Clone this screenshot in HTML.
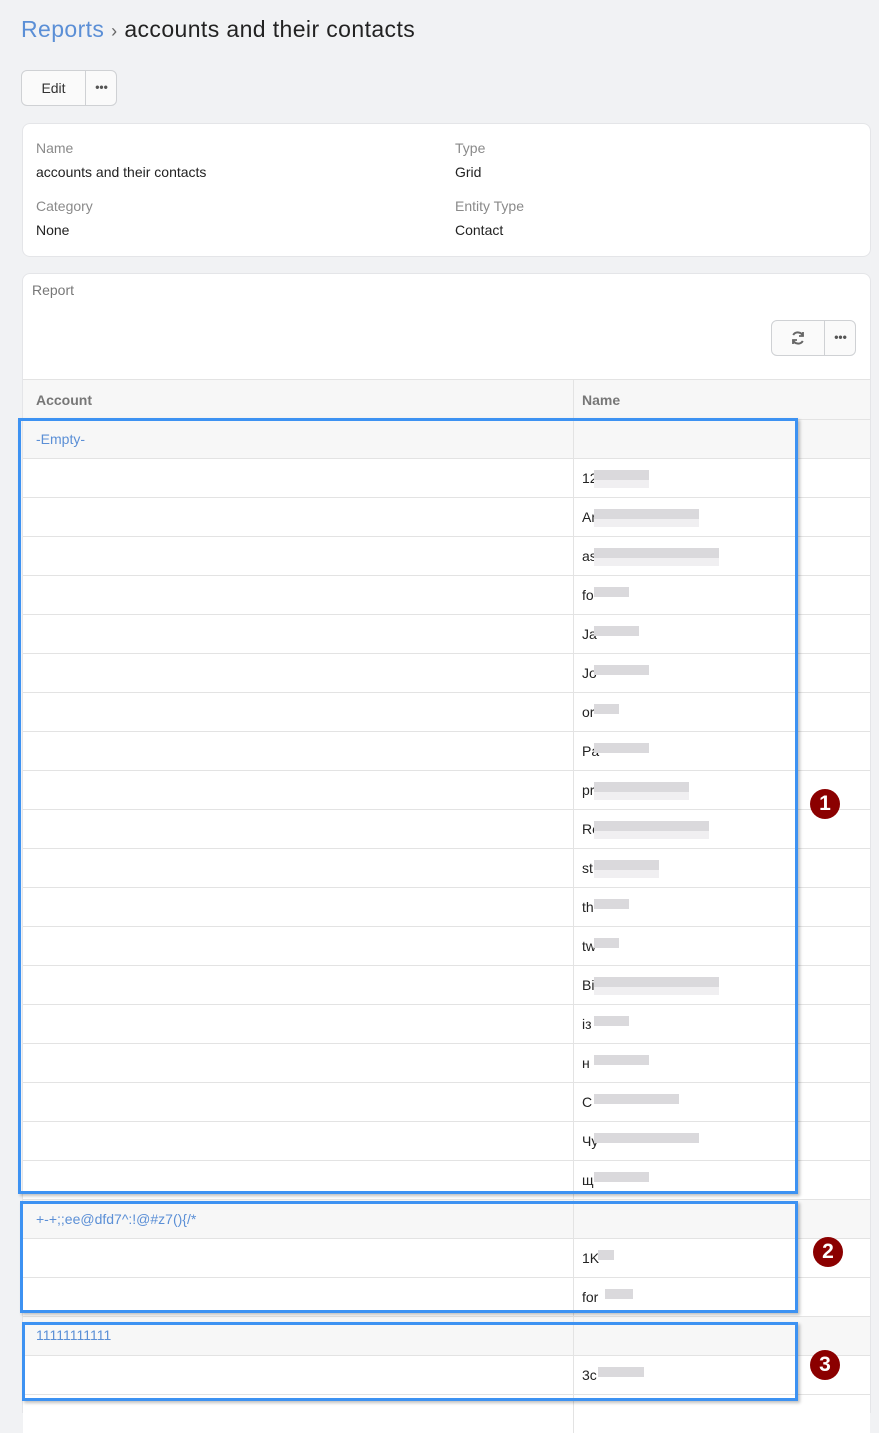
<!DOCTYPE html>
<html><head><meta charset="utf-8"><style>
*{box-sizing:border-box;margin:0;padding:0}
body{width:879px;height:1405px;background:#f1f2f4;font-family:"Liberation Sans","Noto Sans CJK SC",sans-serif;color:#222;position:relative;overflow:hidden;font-size:14px}
.a{position:absolute}
.lbl{color:#8a8a8a;font-size:14px}
.card{background:#fff;border:1px solid #e4e5e8;border-radius:8px}
.row{position:absolute;left:23px;width:847px;height:39px;border-top:1px solid #e3e3e3;background:#fff}
.row.g{background:#f7f7f7}
.row .c2{position:absolute;left:550px;top:0;bottom:0;border-left:1px solid #e3e3e3}
.row .t1{position:absolute;left:13px;top:11px;color:#5b8fd6;font-size:14px}
.row .t2{position:absolute;left:559px;top:11px;font-size:14px;color:#222}
.bl{position:absolute;top:11px;height:10px;background:#dad9dc}
.bl2{position:absolute;top:21px;height:8px;background:#f0eff1}
.box{position:absolute;border:3px solid #3d92f2;box-shadow:2px 2px 3px rgba(0,0,0,.25)}
.badge{position:absolute;width:30px;height:30px;border-radius:50%;background:#8b0000;color:#fff;font-weight:bold;font-size:21px;text-align:center;line-height:30px}
</style></head><body>
<div class="a" style="left:21px;top:16px;font-size:23px;letter-spacing:0.4px;white-space:nowrap"><span style="color:#5b8fd6">Reports</span> <span style="color:#666;font-size:18px">›</span> <span style="color:#222">accounts and their contacts</span></div>
<div class="a" style="left:21px;top:70px;width:96px;height:36px;border:1px solid #cfd1d4;border-radius:6px;background:#fafafa">
 <div class="a" style="left:0;top:0;width:64px;height:34px;border-right:1px solid #cfd1d4;text-align:center;line-height:34px;color:#333">Edit</div>
 <div class="a" style="left:64px;top:0;width:31px;height:34px;text-align:center;line-height:32px;color:#555;font-size:12px;font-weight:bold">•••</div>
</div>
<div class="a card" style="left:22px;top:123px;width:849px;height:134px">
 <div class="a lbl" style="left:13px;top:16px">Name</div>
 <div class="a" style="left:13px;top:40px">accounts and their contacts</div>
 <div class="a lbl" style="left:13px;top:74px">Category</div>
 <div class="a" style="left:13px;top:98px">None</div>
 <div class="a lbl" style="left:432px;top:16px">Type</div>
 <div class="a" style="left:432px;top:40px">Grid</div>
 <div class="a lbl" style="left:432px;top:74px">Entity Type</div>
 <div class="a" style="left:432px;top:98px">Contact</div>
</div>
<div class="a card" style="left:22px;top:273px;width:849px;height:1140px;border-radius:8px 8px 0 0">
 <div class="a lbl" style="left:9px;top:8px;color:#777">Report</div>
 <div class="a" style="left:748px;top:46px;width:85px;height:36px;border:1px solid #cfd1d4;border-radius:6px;background:#fafafa">
  <div class="a" style="left:0;top:0;width:53px;height:34px;border-right:1px solid #cfd1d4">
   <svg class="a" style="left:18px;top:9px" width="16" height="16" viewBox="0 0 16 16" fill="none" stroke="#666" stroke-width="2"><path d="M13 6A5.5 5.5 0 0 0 3.2 5"/><path d="M3 10a5.5 5.5 0 0 0 9.8 1"/><path d="M13 2v4h-4" stroke-width="1.8"/><path d="M3 14v-4h4" stroke-width="1.8"/></svg>
  </div>
  <div class="a" style="left:53px;top:0;width:31px;height:34px;text-align:center;line-height:32px;color:#555;font-size:12px;font-weight:bold">•••</div>
 </div>
</div>
<div class="a" style="left:0;top:-1px;width:879px;height:1410px">
<div class="row g" style="top:380px;height:40px;background:#f7f7f7"><div class="c2"></div>
 <div class="a" style="left:13px;top:12px;color:#777;font-weight:bold">Account</div>
 <div class="a" style="left:559px;top:12px;color:#777;font-weight:bold">Name</div></div>

<div class="row g" style="top:420px"><div class="c2"></div><div class="t1">-Empty-</div></div>
<div class="row" style="top:459px"><div class="c2"></div><div class="t2">12</div><div class="bl" style="left:571px;width:55px"></div><div class="bl2" style="left:571px;width:55px"></div></div>
<div class="row" style="top:498px"><div class="c2"></div><div class="t2">An</div><div class="bl" style="left:571px;width:105px"></div><div class="bl2" style="left:571px;width:105px"></div></div>
<div class="row" style="top:537px"><div class="c2"></div><div class="t2">as</div><div class="bl" style="left:571px;width:125px"></div><div class="bl2" style="left:571px;width:125px"></div></div>
<div class="row" style="top:576px"><div class="c2"></div><div class="t2">fo</div><div class="bl" style="left:571px;width:35px"></div></div>
<div class="row" style="top:615px"><div class="c2"></div><div class="t2">Ja</div><div class="bl" style="left:571px;width:45px"></div></div>
<div class="row" style="top:654px"><div class="c2"></div><div class="t2">Jo</div><div class="bl" style="left:571px;width:55px"></div></div>
<div class="row" style="top:693px"><div class="c2"></div><div class="t2">or</div><div class="bl" style="left:571px;width:25px"></div></div>
<div class="row" style="top:732px"><div class="c2"></div><div class="t2">Pa</div><div class="bl" style="left:571px;width:55px"></div></div>
<div class="row" style="top:771px"><div class="c2"></div><div class="t2">pr</div><div class="bl" style="left:571px;width:95px"></div><div class="bl2" style="left:571px;width:95px"></div></div>
<div class="row" style="top:810px"><div class="c2"></div><div class="t2">Re</div><div class="bl" style="left:571px;width:115px"></div><div class="bl2" style="left:571px;width:115px"></div></div>
<div class="row" style="top:849px"><div class="c2"></div><div class="t2">st</div><div class="bl" style="left:571px;width:65px"></div><div class="bl2" style="left:571px;width:65px"></div></div>
<div class="row" style="top:888px"><div class="c2"></div><div class="t2">th</div><div class="bl" style="left:571px;width:35px"></div></div>
<div class="row" style="top:927px"><div class="c2"></div><div class="t2">tw</div><div class="bl" style="left:571px;width:25px"></div></div>
<div class="row" style="top:966px"><div class="c2"></div><div class="t2">Bi</div><div class="bl" style="left:571px;width:125px"></div><div class="bl2" style="left:571px;width:125px"></div></div>
<div class="row" style="top:1005px"><div class="c2"></div><div class="t2">із</div><div class="bl" style="left:571px;width:35px"></div></div>
<div class="row" style="top:1044px"><div class="c2"></div><div class="t2">н</div><div class="bl" style="left:571px;width:55px"></div></div>
<div class="row" style="top:1083px"><div class="c2"></div><div class="t2">С</div><div class="bl" style="left:571px;width:85px"></div></div>
<div class="row" style="top:1122px"><div class="c2"></div><div class="t2">Чу</div><div class="bl" style="left:571px;width:105px"></div></div>
<div class="row" style="top:1161px"><div class="c2"></div><div class="t2">щ</div><div class="bl" style="left:571px;width:55px"></div></div>
<div class="row g" style="top:1200px"><div class="c2"></div><div class="t1">+-+;;ee@dfd7^:!@#z7(){/*</div></div>
<div class="row" style="top:1239px"><div class="c2"></div><div class="t2">1K</div><div class="bl" style="left:575px;width:16px"></div></div>
<div class="row" style="top:1278px"><div class="c2"></div><div class="t2">for</div><div class="bl" style="left:582px;width:28px"></div></div>
<div class="row g" style="top:1317px"><div class="c2"></div><div class="t1" style="top:10px">11111111111</div></div>
<div class="row" style="top:1356px"><div class="c2"></div><div class="t2">3c</div><div class="bl" style="left:575px;width:46px"></div></div>
<div class="row" style="top:1395px"><div class="c2"></div></div>
</div>

<div class="box" style="left:18px;top:418px;width:780px;height:776px"></div>
<div class="box" style="left:20px;top:1201px;width:778px;height:112px"></div>
<div class="box" style="left:22px;top:1322px;width:776px;height:79px"></div>
<div class="badge" style="left:810px;top:789px">1</div>
<div class="badge" style="left:813px;top:1237px">2</div>
<div class="badge" style="left:810px;top:1350px">3</div>
</body></html>
